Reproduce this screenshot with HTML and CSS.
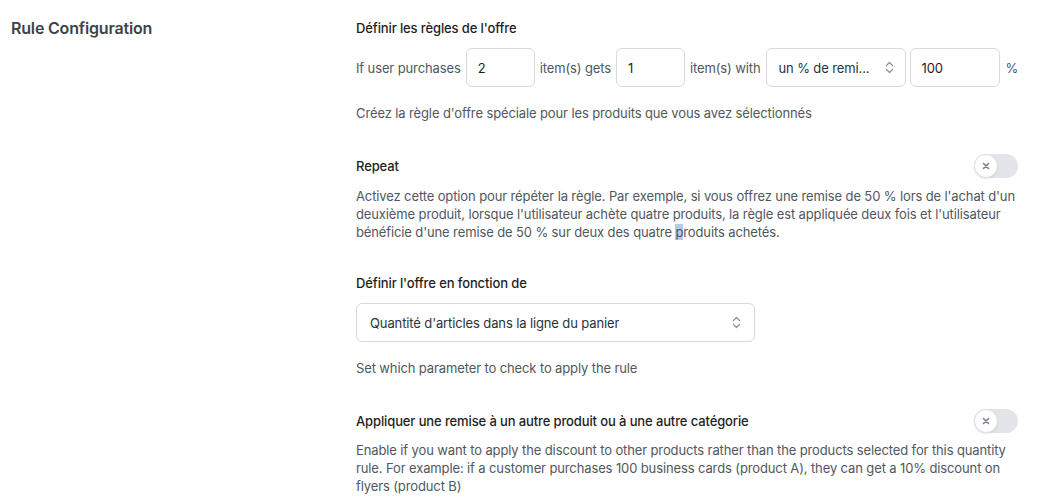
FILE: index.html
```html
<!DOCTYPE html>
<html lang="fr">
<head>
<meta charset="utf-8">
<title>Rule Configuration</title>
<link rel="stylesheet" href="styles.css">
</head>
<body>
<div class="page">
  <div class="side">
    <h2 class="side-title">Rule Configuration</h2>
  </div>
  <div class="content">
    <section class="sec sec-first">
      <div class="label">Définir les règles de l'offre</div>
      <div class="rule-row">
        <span class="txt">If user purchases</span>
        <div class="field w-qty">2</div>
        <span class="txt">item(s) gets</span>
        <div class="field w-qty">1</div>
        <span class="txt">item(s) with</span>
        <div class="field select w-type"><span class="sel-text">un % de remi...</span>
          <svg class="chev" width="9" height="13" viewBox="0 0 9 13"><path d="M1.5 4.5 L4.5 1.5 L7.5 4.5 M1.5 8.5 L4.5 11.5 L7.5 8.5" fill="none" stroke="#8a8f98" stroke-width="1.2" stroke-linecap="round" stroke-linejoin="round"/></svg>
        </div>
        <div class="field w-val">100</div>
        <span class="txt pct">%</span>
      </div>
      <p class="help help-gap">Créez la règle d'offre spéciale pour les produits que vous avez sélectionnés</p>
    </section>

    <section class="sec">
      <div class="head-row">
        <div class="label">Repeat</div>
        <div class="toggle"><span class="knob"><svg width="8" height="8" viewBox="0 0 8 8"><path d="M1.5 1.5 L6.5 6.5 M6.5 1.5 L1.5 6.5" stroke="#7b7d95" stroke-width="1.6" stroke-linecap="round"/></svg></span></div>
      </div>
      <p class="para">Activez cette option pour répéter la règle. Par exemple, si vous offrez une remise de 50 % lors de l'achat d'un deuxième produit, lorsque l'utilisateur achète quatre produits, la règle est appliquée deux fois et l'utilisateur bénéficie d'une remise de 50 % sur deux des quatre <span class="hl">p</span>roduits achetés.</p>
    </section>

    <section class="sec sec-3">
      <div class="label">Définir l'offre en fonction de</div>
      <div class="field select w-wide"><span class="sel-text">Quantité d'articles dans la ligne du panier</span>
        <svg class="chev" width="9" height="13" viewBox="0 0 9 13"><path d="M1.5 4.5 L4.5 1.5 L7.5 4.5 M1.5 8.5 L4.5 11.5 L7.5 8.5" fill="none" stroke="#8a8f98" stroke-width="1.2" stroke-linecap="round" stroke-linejoin="round"/></svg>
      </div>
      <p class="help help-gap">Set which parameter to check to apply the rule</p>
    </section>

    <section class="sec">
      <div class="head-row">
        <div class="label">Appliquer une remise à un autre produit ou à une autre catégorie</div>
        <div class="toggle"><span class="knob"><svg width="8" height="8" viewBox="0 0 8 8"><path d="M1.5 1.5 L6.5 6.5 M6.5 1.5 L1.5 6.5" stroke="#7b7d95" stroke-width="1.6" stroke-linecap="round"/></svg></span></div>
      </div>
      <p class="para para-b">Enable if you want to apply the discount to other products rather than the products selected for this quantity rule. For example: if a customer purchases 100 business cards (product A), they can get a 10% discount on flyers (product B)</p>
    </section>
  </div>
</div>
</body>
</html>
```

FILE: styles.css
```css
* { box-sizing: border-box; }
html, body { margin: 0; padding: 0; background: #ffffff; }
body {
  font-family: Inter, "Noto Sans", "Liberation Sans", sans-serif;
  font-size: 13px;
  line-height: 18px;
  letter-spacing: -0.12px;
  color: #50575e;
}
.page {
  display: flex;
  width: 1053px;
  height: 503px;
  overflow: hidden;
}
.side {
  width: 356px;
  flex: none;
  padding: 17px 0 0 11px;
}
.side-title {
  margin: 0;
  font-size: 16px;
  line-height: 22px;
  font-weight: 600;
  letter-spacing: -0.18px;
  color: #3c434a;
}
.content {
  width: 662px;
  flex: none;
  padding-top: 19px;
}
.sec { margin-top: 32px; }
.sec-first { margin-top: 0; }
.sec-3 { margin-top: 33px; }
.label {
  font-weight: 500;
  color: #1e1e1e;
  line-height: 18px;
}
.rule-row {
  display: flex;
  align-items: center;
  margin-top: 11px;
  height: 39px;
}
.txt { color: #50575e; white-space: nowrap; margin-right: 5px; }
.field + .txt { margin-left: 5px; }
.pct { margin-left: 6px !important; }
.field {
  height: 39px;
  border: 1px solid #d6d9de;
  border-radius: 6px;
  background: #fff;
  display: flex;
  align-items: center;
  padding: 0 11px;
  color: #1e1e1e;
  font-size: 13px;
  flex: none;
}
.w-qty { width: 69px; }
.w-type { width: 140px; margin-right: 4px; padding-left: 12px; }
.w-val { width: 90px; }
.w-wide { width: 399px; margin-top: 11px; padding-left: 13px; padding-right: 13px; }
.select { justify-content: space-between; color: #2c3338; }
.sel-text { white-space: nowrap; overflow: hidden; }
.chev { flex: none; }
.help { margin: 0; }
.help-gap { margin-top: 17px; }
.head-row {
  display: flex;
  align-items: center;
  justify-content: space-between;
  height: 24px;
}
.para { margin: 9px 0 0; }
.para-b { margin-top: 8px; }
.toggle {
  width: 44px;
  height: 24px;
  border-radius: 12px;
  background: #e3e5ea;
  position: relative;
  flex: none;
}
.knob {
  position: absolute;
  left: 0;
  top: 0;
  width: 24px;
  height: 24px;
  border-radius: 50%;
  background: #fff;
  border: 1px solid #dcdfe4;
  box-shadow: 0 1px 2px rgba(0,0,0,0.08);
  display: flex;
  align-items: center;
  justify-content: center;
}
.hl { background: #b3c9ee; }
```
